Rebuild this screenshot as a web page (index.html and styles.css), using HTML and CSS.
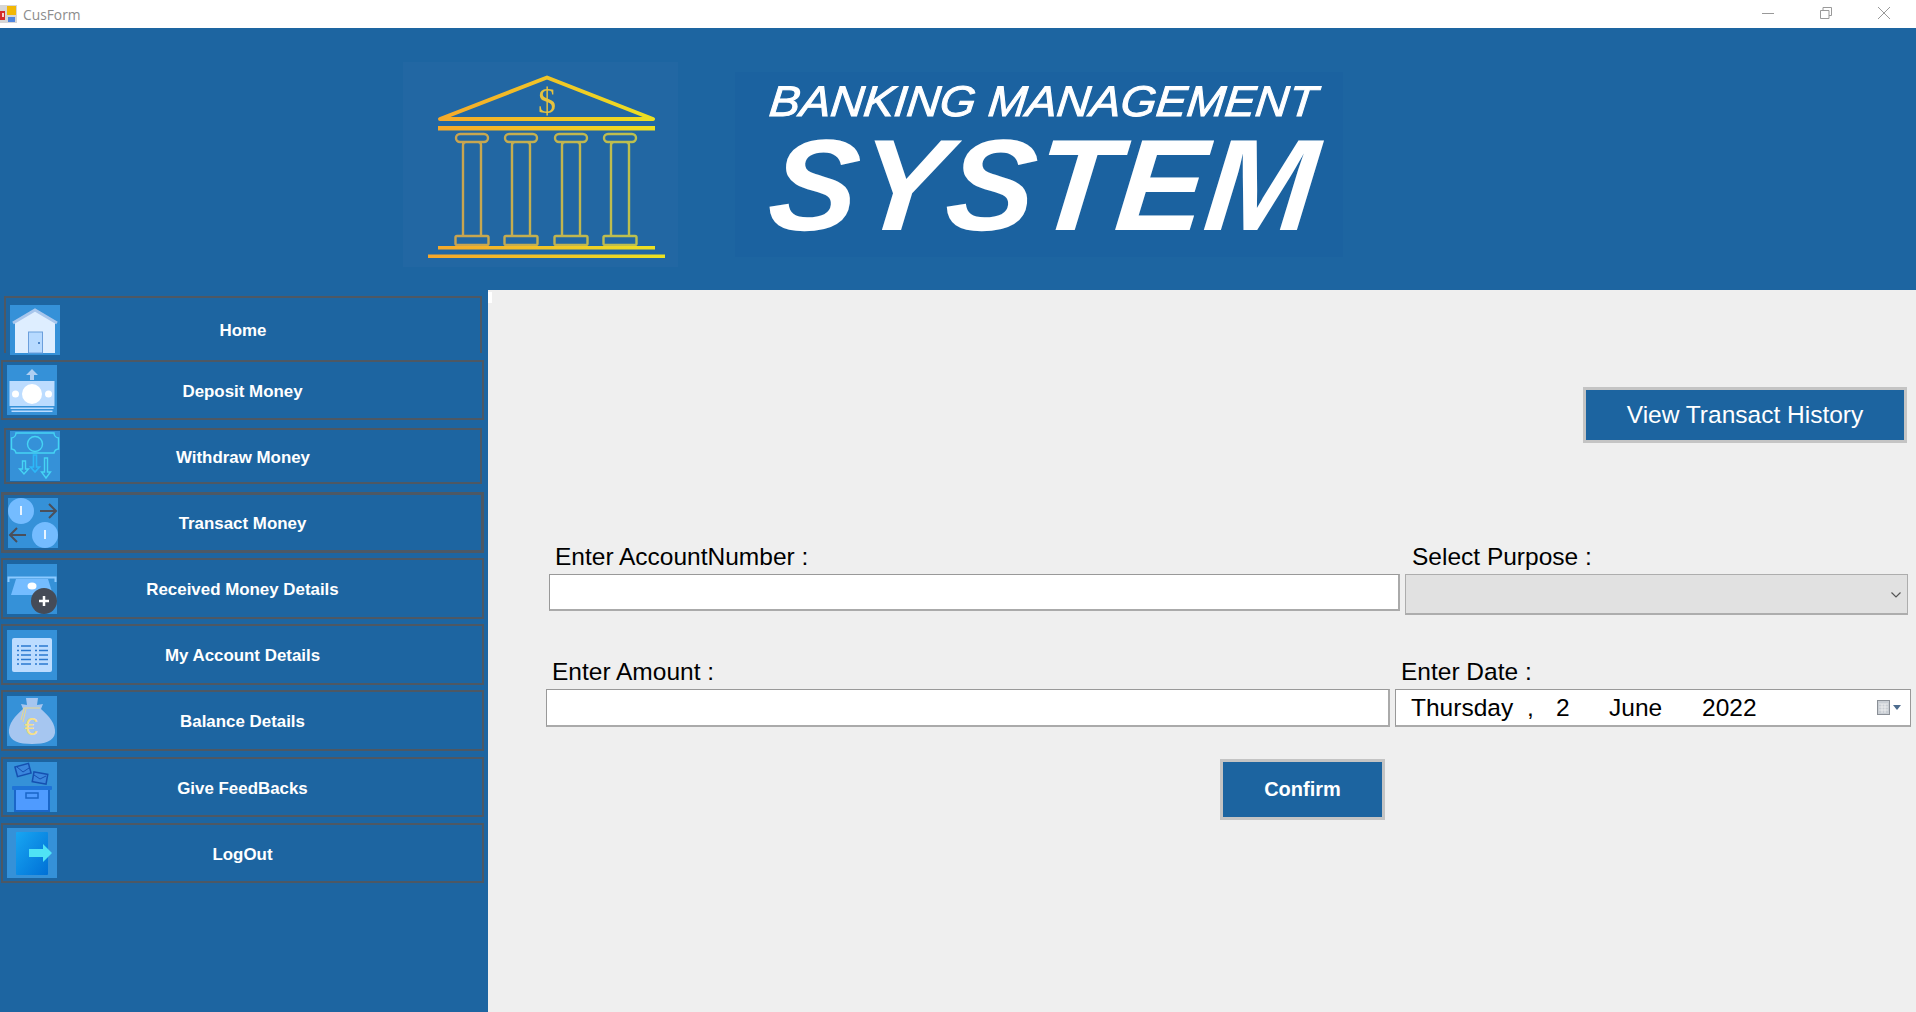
FILE: index.html
```html
<!DOCTYPE html>
<html lang="en">
<head>
  <meta charset="UTF-8">
  <meta name="viewport" content="width=device-width, initial-scale=1.0">
  <title>CusForm</title>
  <link rel="stylesheet" href="styles.css">
</head>
<body>
  <div class="titlebar">
    <svg class="app-icon" viewBox="0 0 17 18">
      <rect width="17" height="18" fill="#d6d6d6"/>
      <rect x="0" y="6" width="5" height="9" fill="#d42a2a"/>
      <rect x="2" y="8" width="2" height="4" fill="#f6d0d0"/>
      <rect x="7" y="1" width="9" height="9" fill="#f2b705"/>
      <rect x="8" y="12" width="7" height="5" fill="#4f86e0"/>
    </svg>
    <span class="title-text">CusForm</span>
    <div class="win-controls">
      <svg viewBox="0 0 12 12"><path d="M0 6.5H12" stroke="#999" fill="none"/></svg>
      <svg viewBox="0 0 12 12"><path d="M.5 3.5h8.500v8h-8.500zM3 3.500V.5h8.500v8H9" stroke="#999" fill="none"/></svg>
      <svg viewBox="0 0 12 12"><path d="M0 0L12 12M12 0L0 12" stroke="#999" fill="none"/></svg>
    </div>
  </div>

  <header class="banner">
    <div class="logo-box">
      <svg viewBox="0 0 275 205" width="275" height="205">
        <defs>
          <linearGradient id="gold" gradientUnits="userSpaceOnUse" x1="25" y1="0" x2="262" y2="0">
            <stop offset="0" stop-color="#f6a62a"/>
            <stop offset="1" stop-color="#ece322"/>
          </linearGradient>
          <linearGradient id="pillar" gradientUnits="userSpaceOnUse" x1="50" y1="0" x2="240" y2="0">
            <stop offset="0" stop-color="#c9a350"/>
            <stop offset="1" stop-color="#bcc24e"/>
          </linearGradient>
        </defs>
        <g class="soft">
          <path d="M144 15.500L250 57H37Z" fill="none" stroke="url(#gold)" stroke-width="4" stroke-linejoin="round"/>
          <rect x="35" y="64" width="217" height="4.500" fill="url(#gold)"/>
          <text class="logo-dollar" x="144" y="51" text-anchor="middle">$</text>
          <g fill="none" stroke="url(#pillar)" stroke-width="2.400">
            <path d="M57 72h24a4 4 0 0 1 0 8h-24a4 4 0 0 1 0-8zM60 173V83a3 3 0 0 1 3-3h12a3 3 0 0 1 3 3V173M54 174h30a1.500 1.500 0 0 1 1.500 1.500v6a1.500 1.500 0 0 1-1.500 1.500h-30a1.500 1.500 0 0 1-1.500-1.500v-6a1.500 1.500 0 0 1 1.500-1.500z"/>
            <path d="M106 72h24a4 4 0 0 1 0 8h-24a4 4 0 0 1 0-8zM109 173V83a3 3 0 0 1 3-3h12a3 3 0 0 1 3 3V173M103 174h30a1.500 1.500 0 0 1 1.500 1.500v6a1.500 1.500 0 0 1-1.500 1.500h-30a1.500 1.500 0 0 1-1.500-1.500v-6a1.500 1.500 0 0 1 1.500-1.500z"/>
            <path d="M156 72h24a4 4 0 0 1 0 8h-24a4 4 0 0 1 0-8zM159 173V83a3 3 0 0 1 3-3h12a3 3 0 0 1 3 3V173M153 174h30a1.500 1.500 0 0 1 1.500 1.500v6a1.500 1.500 0 0 1-1.500 1.500h-30a1.500 1.500 0 0 1-1.500-1.500v-6a1.500 1.500 0 0 1 1.500-1.500z"/>
            <path d="M205 72h24a4 4 0 0 1 0 8h-24a4 4 0 0 1 0-8zM208 173V83a3 3 0 0 1 3-3h12a3 3 0 0 1 3 3V173M202 174h30a1.500 1.500 0 0 1 1.500 1.500v6a1.500 1.500 0 0 1-1.500 1.500h-30a1.500 1.500 0 0 1-1.500-1.500v-6a1.500 1.500 0 0 1 1.500-1.500z"/>
          </g>
          <rect x="35" y="184" width="217" height="3.500" fill="url(#gold)"/>
          <rect x="25" y="192.500" width="237" height="3.500" fill="url(#gold)"/>
        </g>
      </svg>
    </div>
    <div class="word-box">
      <svg class="word-svg" viewBox="0 0 608 185" width="608" height="185">
        <g class="soft" fill="#fff">
          <text class="word-small" transform="translate(5 0) skewX(-6)" x="33" y="44" textLength="547" lengthAdjust="spacingAndGlyphs">BANKING MANAGEMENT</text>
          <text class="word-big" transform="translate(17 0) skewX(-6)" x="30" y="158" textLength="547" lengthAdjust="spacingAndGlyphs">SYSTEM</text>
        </g>
      </svg>
    </div>
  </header>

  <div class="main">
    <nav class="menu">
      <a class="menu-item narrow item-home" href="#">
        <svg class="menu-icon" viewBox="0 0 50 50">
          <rect width="50" height="50" fill="#3591d8"/>
          <path d="M5 16L25 5L45 16V48H5Z" fill="#deeeff"/>
          <path d="M3 18L25 5L47 18" fill="none" stroke="#a8c6ec" stroke-width="3"/>
          <rect x="18.500" y="27" width="14" height="21" fill="#b7daff" stroke="#6b9fdc"/>
          <rect x="28" y="37" width="2" height="2" fill="#4e86c8"/>
        </svg>
        <span class="menu-label">Home</span>
      </a>
      <a class="menu-item wide item-deposit" href="#">
        <svg class="menu-icon" viewBox="0 0 50 50">
          <rect width="50" height="50" fill="#3591d8"/>
          <path d="M25 4L31 10H27V15H23V10H19Z" fill="#afcff2"/>
          <rect x="2.500" y="16" width="45" height="25" fill="#bcdcff"/>
          <circle cx="25" cy="29" r="10" fill="#fff"/>
          <circle cx="8.500" cy="29" r="3.500" fill="#fff"/>
          <circle cx="41.500" cy="29" r="3.500" fill="#fff"/>
          <rect x="3.500" y="42.500" width="43" height="1.500" fill="#bcdcff"/>
          <rect x="4.500" y="45.500" width="41" height="1.500" fill="#bcdcff"/>
        </svg>
        <span class="menu-label">Deposit Money</span>
      </a>
      <a class="menu-item narrow item-withdraw" href="#">
        <svg class="menu-icon" viewBox="0 0 50 50">
          <rect width="50" height="50" fill="#3591d8"/>
          <g fill="none" stroke="#45d4f4" stroke-width="1.400">
            <path d="M6 2H44A5 5 0 0 0 48.500 7V18A5 5 0 0 0 44 22H6A5 5 0 0 0 1.500 18V7A5 5 0 0 0 6 2Z"/>
            <circle cx="25" cy="13" r="7.500"/>
            <path d="M12.500 30V38H9.500L14 43L18.500 38H15.500V30Z"/>
            <path d="M34.500 27V41H31.500L36 47L40.500 41H37.500V27Z"/>
          </g>
          <path d="M23.500 24V36H20.500L25 41L29.500 36H26.500V24Z" fill="none" stroke="#2cb8f8" stroke-width="1.600"/>
        </svg>
        <span class="menu-label">Withdraw Money</span>
      </a>
      <a class="menu-item wide item-transact" href="#">
        <svg class="menu-icon" viewBox="0 0 50 50">
          <rect width="50" height="50" fill="#3591d8"/>
          <circle cx="13" cy="13" r="13" fill="#74bcff"/>
          <circle cx="37" cy="37" r="13" fill="#74bcff"/>
          <rect x="12" y="8" width="2" height="9" fill="#e8f4ff"/>
          <rect x="36" y="32" width="2" height="9" fill="#e8f4ff"/>
          <path d="M32 13H48M41 6L48 13L41 20" fill="none" stroke="#4a4f5a" stroke-width="2"/>
          <path d="M18 37H2M9 30L2 37L9 44" fill="none" stroke="#4a4f5a" stroke-width="2"/>
        </svg>
        <span class="menu-label">Transact Money</span>
      </a>
      <a class="menu-item wide item-std" href="#">
        <svg class="menu-icon" viewBox="0 0 50 50">
          <rect width="50" height="50" fill="#3591d8"/>
          <path d="M1.500 18V13.500H48.500V18" fill="none" stroke="#8ccaff" stroke-width="2"/>
          <path d="M9 15H41L46 31H4Z" fill="#74bcff"/>
          <ellipse cx="25" cy="22" rx="4.500" ry="3.500" fill="#fff"/>
          <circle cx="37" cy="37" r="13" fill="#454b57"/>
          <path d="M37 32V42M32 37H42" stroke="#fff" stroke-width="2.500"/>
        </svg>
        <span class="menu-label">Received Money Details</span>
      </a>
      <a class="menu-item wide item-std" href="#">
        <svg class="menu-icon" viewBox="0 0 50 50">
          <rect width="50" height="50" fill="#3591d8"/>
          <rect x="5" y="8" width="40" height="34" rx="2" fill="#bcdcff"/>
          <g stroke="#2a78cf" stroke-width="1.600" fill="none">
            <path d="M14 16H24M14 20.500H24M14 25H24M14 29.500H24M14 34H24"/>
            <path d="M32 16H41M32 20.500H41M32 25H41M32 29.500H41M32 34H41"/>
            <path d="M10 16H12M10 20.500H12M10 25H12M10 29.500H12M10 34H12"/>
            <path d="M28 16H30M28 20.500H30M28 25H30M28 29.500H30M28 34H30"/>
          </g>
        </svg>
        <span class="menu-label">My Account Details</span>
      </a>
      <a class="menu-item wide item-balance" href="#">
        <svg class="menu-icon" viewBox="0 0 50 50">
          <rect width="50" height="50" fill="#3591d8"/>
          <path d="M19 2H31L30 9L36 8L34 13C42 20 49 28 48 37C47 45 38 48 25 48C12 48 3 45 2 37C1 28 8 20 16 13L14 8L20 9Z" fill="#a6c6f0"/>
          <path d="M17 12H33M17 12L14 24M19 13L16 26" fill="none" stroke="#e9d98c" stroke-width="1"/>
          <text class="bag-euro" x="24" y="39" text-anchor="middle">€</text>
        </svg>
        <span class="menu-label">Balance Details</span>
      </a>
      <a class="menu-item wide item-give" href="#">
        <svg class="menu-icon" viewBox="0 0 50 50">
          <rect width="50" height="50" fill="#3591d8"/>
          <g fill="#3a86dd" stroke="#1550b0" stroke-width="1.500">
            <rect x="9" y="3" width="14" height="10" transform="rotate(-15 16 8)"/>
            <rect x="26" y="11" width="14" height="10" transform="rotate(10 33 16)"/>
            <path d="M10 5L16 10L22 6M27 13L33 17L39 14" fill="none" stroke-width="1"/>
          </g>
          <rect x="8" y="26" width="34" height="23" fill="#4f9bff" stroke="#1a66c8" stroke-width="2"/>
          <rect x="5" y="24" width="40" height="4" rx="1" fill="#1f73d6"/>
          <rect x="19" y="31" width="12" height="5" fill="#4f9bff" stroke="#1a66c8" stroke-width="1.500"/>
        </svg>
        <span class="menu-label">Give FeedBacks</span>
      </a>
      <a class="menu-item wide item-logout" href="#">
        <svg class="menu-icon" viewBox="0 0 50 50">
          <defs>
            <linearGradient id="door" x1="0" y1="0" x2="1" y2="1">
              <stop offset="0" stop-color="#18a6f2"/>
              <stop offset="1" stop-color="#0070d6"/>
            </linearGradient>
          </defs>
          <rect width="50" height="50" fill="#3591d8"/>
          <rect x="9" y="4" width="32" height="43" rx="1" fill="url(#door)"/>
          <path d="M22 21H36V16L45 25L36 34V29H22Z" fill="#4fe3f5"/>
        </svg>
        <span class="menu-label">LogOut</span>
      </a>
    </nav>

    <main class="panel">
      <span class="panel-notch"></span>
      <button class="btn btn-history">View Transact History</button>

      <div class="form-row row-account">
        <div class="field field-account">
          <label class="field-label">Enter AccountNumber :</label>
          <input class="text-input" type="text">
        </div>
        <div class="field field-purpose">
          <label class="field-label">Select Purpose :</label>
          <div class="select-box">
            <svg class="chevron" viewBox="0 0 10 6"><path d="M.5 .5L5 5L9.500 .5" fill="none" stroke="#555" stroke-width="1.200"/></svg>
          </div>
        </div>
      </div>

      <div class="form-row row-amount">
        <div class="field field-amount">
          <label class="field-label">Enter Amount :</label>
          <input class="text-input tall" type="text">
        </div>
        <div class="field field-date">
          <label class="field-label">Enter Date :</label>
          <div class="date-box">
            <span class="date-day">Thursday</span>
            <span class="date-comma">,</span>
            <span class="date-num">2</span>
            <span class="date-month">June</span>
            <span class="date-year">2022</span>
            <svg class="cal-icon" viewBox="0 0 24 15">
              <rect x=".5" y=".5" width="12" height="14" fill="#c9ced4" stroke="#8a8f96"/>
              <path d="M2 4H11M2 7H11M2 10H11M5 4V13M8 4V13" stroke="#f2f2f2" fill="none" stroke-width=".8"/>
              <path d="M16 5H24L20 10Z" fill="#4d6c8e"/>
            </svg>
          </div>
        </div>
      </div>

      <button class="btn btn-confirm">Confirm</button>
    </main>
  </div>
</body>
</html>
```

FILE: styles.css
```css
* { box-sizing: border-box; }
html, body { height: 100%; }
body { margin: 0; background: #1c64a0; font-family: "Liberation Sans", Arial, sans-serif; overflow: hidden; }

.titlebar { height: 28px; background: #fff; display: flex; align-items: center; }
.app-icon { width: 17px; height: 18px; margin-top: -1px; }
.title-text { margin-left: 6px; font-family: "Open Sans", sans-serif; font-size: 13.800px; color: #8c8c8c; }
.win-controls { margin-left: auto; margin-right: 26px; display: flex; gap: 46px; }
.win-controls svg { width: 12px; height: 12px; display: block; margin-top: -2px; }

.banner { height: 262px; display: flex; padding-left: 403px; background: #1d65a1; }
.logo-box { width: 275px; height: 205px; margin-top: 34px; background: #2267a3; }
.word-box { width: 608px; height: 185px; margin-top: 44px; margin-left: 57px; background: #1b62a0; }
.word-svg { overflow: visible; }
.soft { filter: blur(0.5px); }
.logo-dollar { font-family: "Liberation Serif", serif; font-size: 36px; fill: #e6c23e; }
.word-small { font-family: "Liberation Sans", sans-serif; font-style: italic; font-size: 43px; stroke: #fff; stroke-width: 1px; }
.word-big { font-family: "Liberation Sans", sans-serif; font-weight: bold; font-style: italic; font-size: 130px; }
.bag-euro { font-family: "Liberation Sans", sans-serif; font-size: 24px; fill: #f5e08a; }

.main { display: flex; height: 722px; }

.menu { width: 488px; padding-top: 6px; display: flex; flex-direction: column; background: #1d65a1; }
.menu-item { display: grid; grid-template-columns: 50px 1fr 50px; align-items: center; padding: 0 5px; border: 2px solid #4d5864; color: #fff; text-decoration: none; }
.menu-item.narrow { margin-left: 4px; width: 478px; }
.menu-item.wide { margin-left: 1px; width: 483px; }
.menu-icon { width: 50px; height: 50px; display: block; margin-left: -1px; }
.menu-label { text-align: center; font-weight: bold; font-size: 16.900px; padding-top: 3px; white-space: nowrap; }

.item-home { height: 57px; border-bottom: 0; padding-top: 7px; margin-bottom: 7px; }
.item-home .menu-label { padding-top: 1px; }
.item-deposit { height: 60px; margin-bottom: 8px; }
.item-withdraw { height: 56px; margin-bottom: 8px; }
.item-transact { height: 61px; margin-bottom: 5px; border-width: 3px; }
.item-std { height: 61px; margin-bottom: 5px; }
.item-balance { height: 61px; margin-bottom: 6px; }
.item-give { height: 60px; margin-bottom: 6px; }
.item-logout { height: 60px; }

.panel { position: relative; flex: 1; background: #efefef; padding-top: 97px; display: flex; flex-direction: column; }
.panel-notch { position: absolute; left: 0; top: 2px; width: 4px; height: 11px; background: #fff; }

.btn { font-family: "Liberation Sans", sans-serif; color: #fff; background: #1c64a0; border: 3px solid #c4c4c4; }
.btn-history { align-self: flex-end; margin-right: 9px; width: 324px; height: 56px; font-size: 24.500px; }
.btn-confirm { margin-left: 732px; margin-top: 32px; width: 165px; height: 61px; font-size: 20px; font-weight: bold; }

.form-row { display: flex; }
.row-account { margin-top: 100px; }
.row-amount { margin-top: 43px; }
.field-account { margin-left: 61px; width: 851px; }
.field-purpose { margin-left: 5px; width: 503px; }
.field-amount { margin-left: 58px; width: 844px; }
.field-date { margin-left: 5px; width: 516px; }
.field-label { display: block; height: 31px; line-height: 28px; padding-left: 6px; font-size: 24.500px; color: #000; }
.field-purpose .field-label { padding-left: 7px; }
.field-date .field-label { padding-left: 6px; }

.text-input { display: block; width: 100%; height: 37px; background: #fff; border: 1px solid #999; border-bottom: 2px solid #aaa; border-right: 2px solid #aaa; outline: none; }
.text-input.tall { height: 38px; }

.select-box { position: relative; height: 41px; background: #e1e1e1; border: 1px solid #adadad; border-bottom-width: 2px; }
.chevron { position: absolute; right: 6px; top: 17px; width: 10px; height: 6px; }

.date-box { display: flex; align-items: center; height: 38px; padding-left: 15px; background: #fff; border: 1px solid #999; border-bottom: 2px solid #aaa; font-size: 24.500px; color: #000; }
.date-day { width: 116px; }
.date-comma { width: 29px; }
.date-num { width: 53px; }
.date-month { width: 93px; }
.date-year { flex: 1; }
.cal-icon { width: 24px; height: 15px; margin-right: 9px; }
```
